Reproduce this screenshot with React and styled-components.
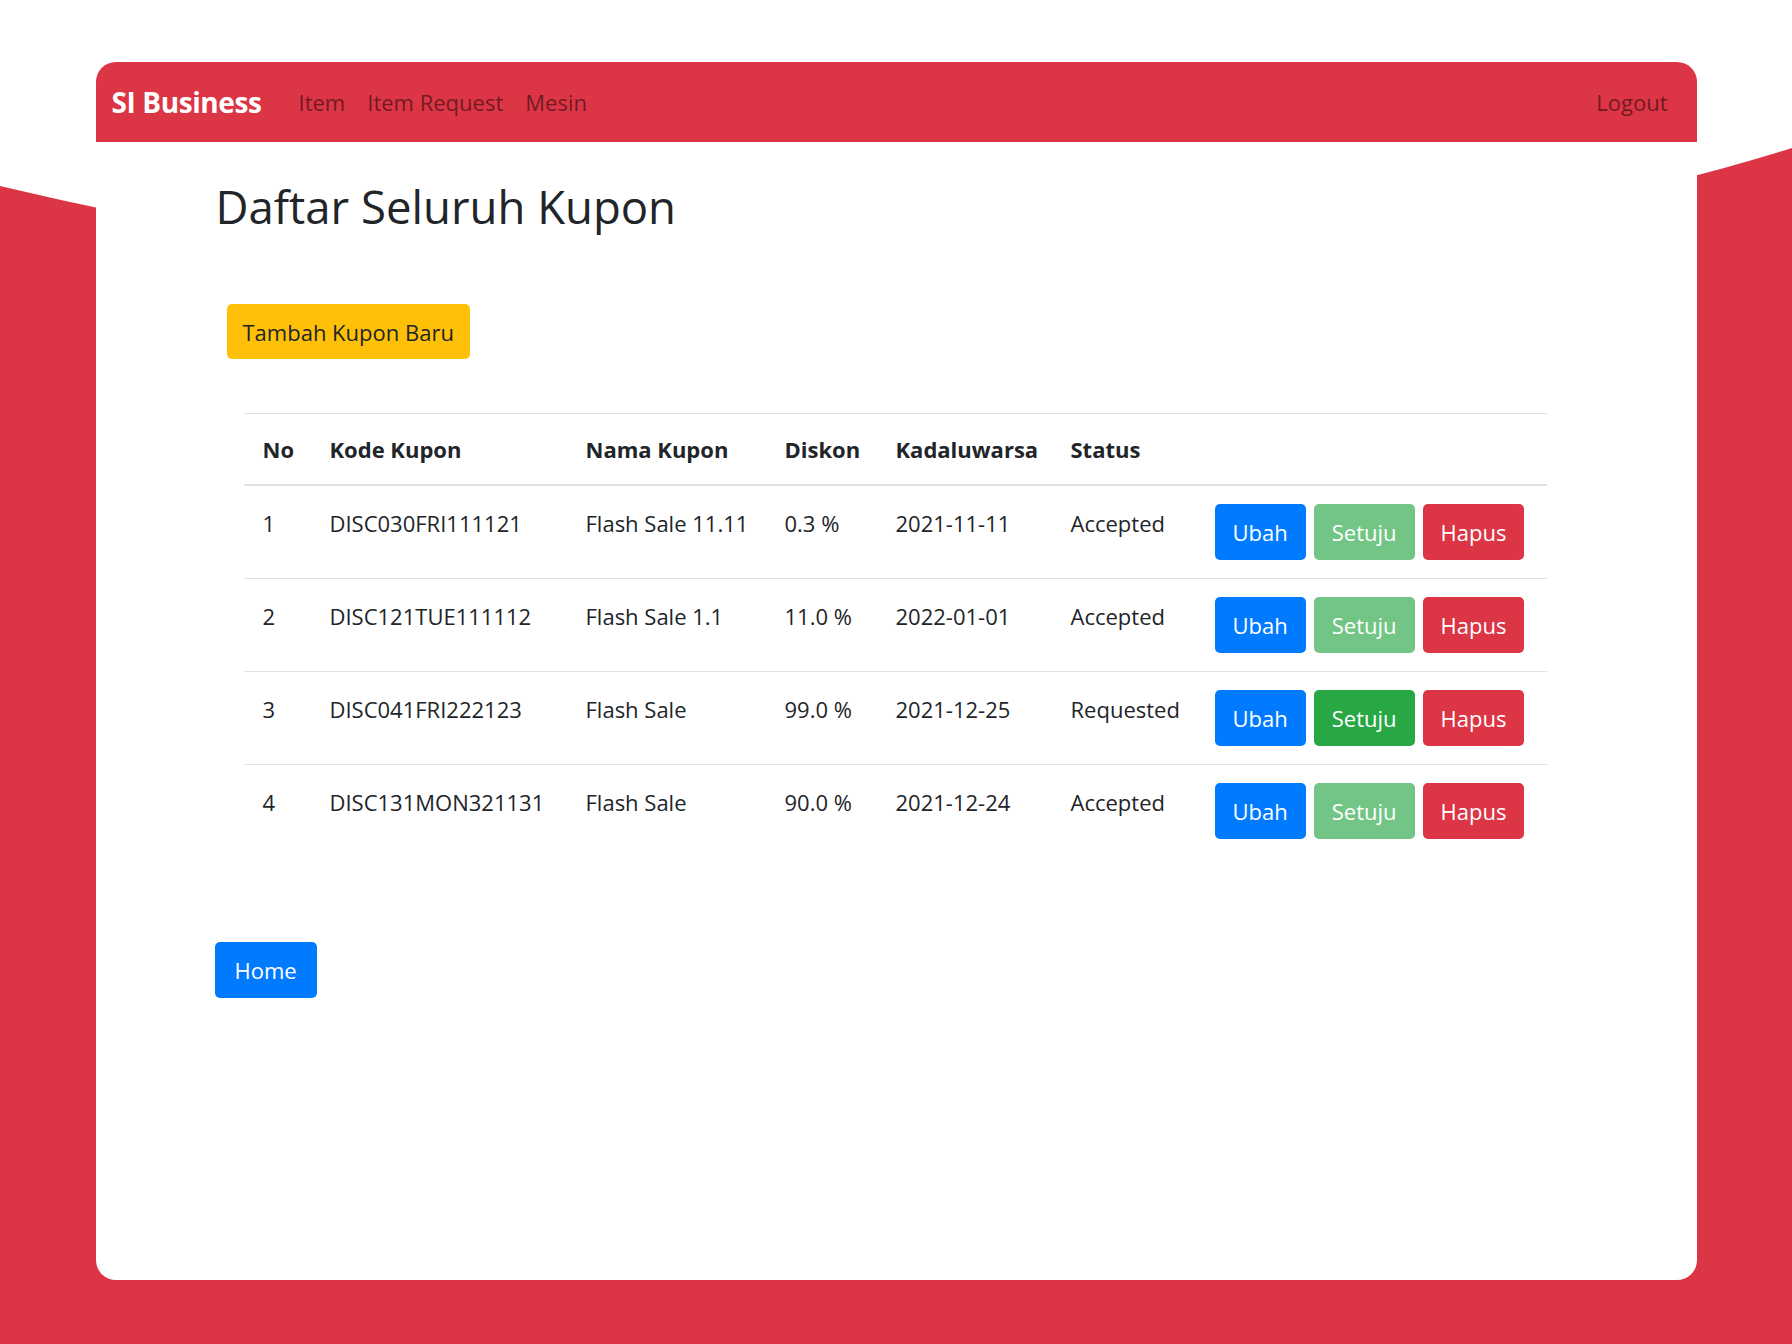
import React from 'react'
import styled, { createGlobalStyle } from 'styled-components'

const GlobalStyle = createGlobalStyle`
  * { box-sizing: border-box; }
  body {
    margin: 0;
    font-family: "Open Sans", "Noto Sans", sans-serif;
    color: #212529;
    background: #fff;
  }
`

const coupons = [
  { no: 1, code: 'DISC030FRI111121', name: 'Flash Sale 11.11', disc: '0.3 %', exp: '2021-11-11', status: 'Accepted' },
  { no: 2, code: 'DISC121TUE111112', name: 'Flash Sale 1.1', disc: '11.0 %', exp: '2022-01-01', status: 'Accepted' },
  { no: 3, code: 'DISC041FRI222123', name: 'Flash Sale', disc: '99.0 %', exp: '2021-12-25', status: 'Requested' },
  { no: 4, code: 'DISC131MON321131', name: 'Flash Sale', disc: '90.0 %', exp: '2021-12-24', status: 'Accepted' },
]

const cols = [67, 256, 199, 111, 175, 144, 351]

function App() {
  return (
    <Page>
      <GlobalStyle />
      <Wave viewBox="0 0 1792 1344" preserveAspectRatio="none">
        <path d="M0,186 C600,330 1300,300 1792,148 L1792,1344 L0,1344 Z" fill="#dc3545" />
      </Wave>
      <Card>
        <Navbar>
          <Brand>SI Business</Brand>
          <NavLinks>
            <NavLink>Item</NavLink>
            <NavLink>Item Request</NavLink>
            <NavLink>Mesin</NavLink>
          </NavLinks>
          <NavLink>Logout</NavLink>
        </Navbar>
        <Content>
          <Title>Daftar Seluruh Kupon</Title>
          <AddButton>Tambah Kupon Baru</AddButton>
          <Table>
            <colgroup>
              {cols.map((w, i) => <col key={i} style={{ width: w }} />)}
            </colgroup>
            <thead>
              <tr>
                <Th>No</Th>
                <Th>Kode Kupon</Th>
                <Th>Nama Kupon</Th>
                <Th>Diskon</Th>
                <Th>Kadaluwarsa</Th>
                <Th>Status</Th>
                <Th></Th>
              </tr>
            </thead>
            <tbody>
              {coupons.map((c) => (
                <tr key={c.no}>
                  <Td>{c.no}</Td>
                  <Td>{c.code}</Td>
                  <Td>{c.name}</Td>
                  <Td>{c.disc}</Td>
                  <Td>{c.exp}</Td>
                  <Td>{c.status}</Td>
                  <Td>
                    <Actions>
                      <Btn variant="primary">Ubah</Btn>
                      <Btn variant="success" disabled={c.status === 'Accepted'}>Setuju</Btn>
                      <Btn variant="danger">Hapus</Btn>
                    </Actions>
                  </Td>
                </tr>
              ))}
            </tbody>
          </Table>
          <HomeButton variant="primary">Home</HomeButton>
        </Content>
      </Card>
    </Page>
  )
}

export default App

const Page = styled.div`
  position: relative;
  min-height: 1344px;
  padding-top: 62px;
  overflow: hidden;
`

const Wave = styled.svg`
  position: absolute;
  top: 0;
  left: 0;
  width: 1792px;
  height: 1344px;
  z-index: 0;
`

const Card = styled.div`
  position: relative;
  z-index: 1;
  width: 1601px;
  height: 1218px;
  margin: 0 auto;
  background: #fff;
  border-radius: 20px;
  overflow: hidden;
`

const Navbar = styled.nav`
  display: flex;
  align-items: center;
  height: 80px;
  padding: 0 18px 0 16px;
  background: #dc3545;
`

const Brand = styled.div`
  font-size: 28px;
  font-weight: 700;
  color: #fff;
  letter-spacing: -0.4px;
  margin-right: 26px;
`

const NavLinks = styled.div`
  display: flex;
  flex: 1;
`

const NavLink = styled.a`
  padding: 0 11px;
  font-size: 22px;
  color: rgba(0, 0, 0, 0.5);
  cursor: pointer;
`

const Content = styled.div`
  padding: 37px 0 0 119px;
`

const Title = styled.h2`
  margin: 0 0 70px 1px;
  font-size: 45.5px;
  font-weight: 500;
  line-height: 55px;
  color: #212529;
`

const Button = styled.button`
  display: inline-block;
  height: 56px;
  padding: 0 17px;
  font-family: inherit;
  font-size: 22px;
  border: 1px solid transparent;
  border-radius: 5px;
  cursor: pointer;
  color: #fff;
  background: ${({ variant }) =>
    variant === 'success' ? '#28a745' : variant === 'danger' ? '#dc3545' : '#007bff'};
  &:disabled {
    opacity: 0.65;
    cursor: default;
  }
`

const AddButton = styled(Button)`
  display: block;
  height: 55px;
  margin-left: 12px;
  padding: 0 15px;
  color: #212529;
  background: #ffc107;
`

const Table = styled.table`
  width: 1303px;
  margin: 54px 0 0 29px;
  border-collapse: collapse;
  table-layout: fixed;
  font-size: 22px;
`

const Th = styled.th`
  padding: 18px 19px;
  text-align: left;
  font-weight: 700;
  line-height: 34px;
  border-top: 1px solid #dee2e6;
  border-bottom: 2px solid #dee2e6;
`

const Td = styled.td`
  padding: 20px 19px 18px;
  vertical-align: top;
  line-height: 34px;
  border-top: 1px solid #dee2e6;
  white-space: nowrap;
`

const Actions = styled.div`
  display: flex;
  gap: 8px;
  margin-top: -2px;
`

const Btn = styled(Button)``

const HomeButton = styled(Button)`
  display: block;
  margin-top: 85px;
  padding: 0 19px;
`
